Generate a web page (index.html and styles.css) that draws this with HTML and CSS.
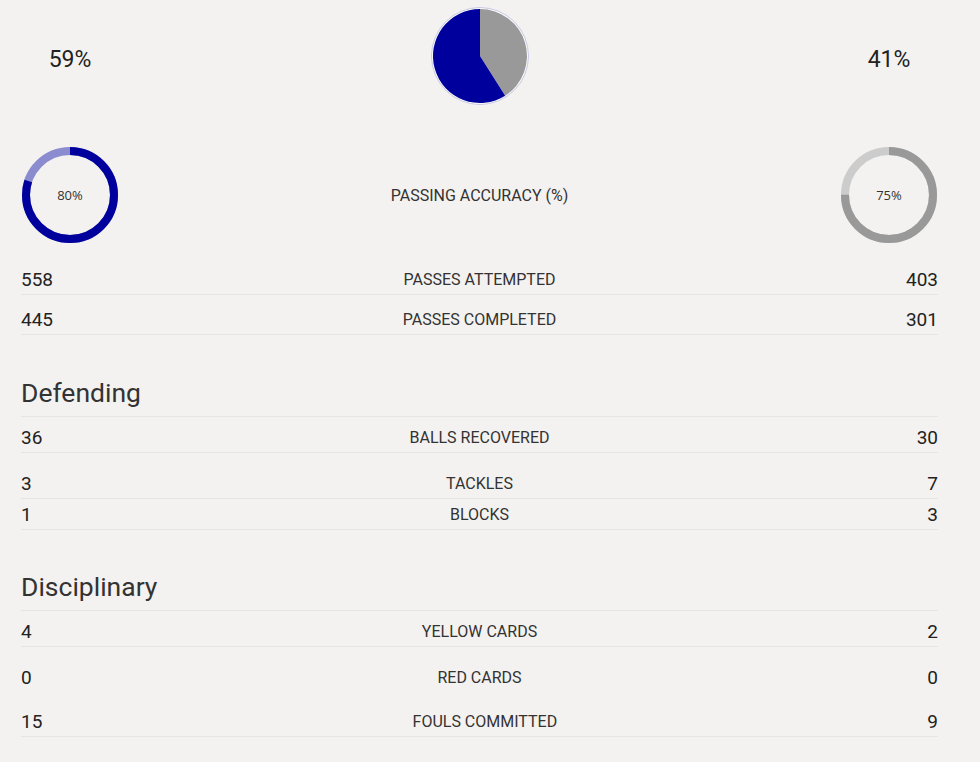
FILE: index.html
```html
<!DOCTYPE html>
<html lang="en">
<head>
<meta charset="utf-8">
<title>Match stats</title>
<link rel="stylesheet" href="styles.css">
</head>
<body>
<main class="stats">
  <section class="possession">
    <div class="pct">59%</div>
    <div class="pie-wrap">
      <svg class="pie" width="100" height="100" viewBox="0 0 100 100">
        <circle cx="50" cy="50" r="48.5" fill="none" stroke="#c9c9e6" stroke-width="1"/>
        <circle cx="50" cy="50" r="47.5" fill="#ffffff"/>
        <path d="M50,50 L50,3 A47,47 0 0 1 75.18,89.68 Z" fill="#999999"/>
        <path d="M50,50 L75.18,89.68 A47,47 0 1 1 50,3 Z" fill="#00009c"/>
      </svg>
    </div>
    <div class="pct">41%</div>
  </section>

  <section class="accuracy">
    <div class="donut">
      <svg width="96" height="96" viewBox="0 0 96 96">
        <circle cx="48" cy="48" r="47.5" fill="none" stroke="#e9e8ef" stroke-width="1"/>
        <circle cx="48" cy="48" r="44" fill="none" stroke="#8b8bd0" stroke-width="8"/>
        <circle cx="48" cy="48" r="44" fill="none" stroke="#00009c" stroke-width="8" stroke-dasharray="221.17 276.46" transform="rotate(-90 48 48)"/>
      </svg>
      <span class="donut-label">80%</span>
    </div>
    <div class="label">PASSING ACCURACY (%)</div>
    <div class="donut">
      <svg width="96" height="96" viewBox="0 0 96 96">
        <circle cx="48" cy="48" r="47.5" fill="none" stroke="#ebebeb" stroke-width="1"/>
        <circle cx="48" cy="48" r="44" fill="none" stroke="#cccccc" stroke-width="8"/>
        <circle cx="48" cy="48" r="44" fill="none" stroke="#999999" stroke-width="8" stroke-dasharray="207.35 276.46" transform="rotate(-90 48 48)"/>
      </svg>
      <span class="donut-label">75%</span>
    </div>
  </section>

  <div class="row row--first"><span class="num">558</span><span class="label">PASSES ATTEMPTED</span><span class="num">403</span></div>
  <div class="row row--mid"><span class="num">445</span><span class="label">PASSES COMPLETED</span><span class="num">301</span></div>

  <h2 class="heading">Defending</h2>
  <div class="row"><span class="num">36</span><span class="label">BALLS RECOVERED</span><span class="num">30</span></div>
  <div class="row row--gap"><span class="num">3</span><span class="label">TACKLES</span><span class="num">7</span></div>
  <div class="row row--tight"><span class="num">1</span><span class="label">BLOCKS</span><span class="num">3</span></div>

  <h2 class="heading">Disciplinary</h2>
  <div class="row"><span class="num">4</span><span class="label">YELLOW CARDS</span><span class="num">2</span></div>
  <div class="row row--gap row--plain"><span class="num">0</span><span class="label">RED CARDS</span><span class="num">0</span></div>
  <div class="row row--gap2"><span class="num">15</span><span class="label">FOULS COMMITTED</span><span class="num">9</span></div>
</main>
</body>
</html>
```

FILE: styles.css
```css
html, body {
  margin: 0;
  padding: 0;
  background: #f3f2f0;
}

body {
  font-family: Roboto, "Liberation Sans", Arial, sans-serif;
  color: #333333;
}

.stats {
  width: 917px;
  margin-left: 21px;
}

.possession {
  display: grid;
  grid-template-columns: 98px 1fr 98px;
  align-items: center;
  padding-top: 6px;
  height: 100px;
}

.pct {
  text-align: center;
  font-size: 23px;
  color: #222222;
  padding-top: 6px;
}

.pie-wrap {
  display: flex;
  justify-content: center;
  height: 100px;
}

.pie {
  display: block;
}

.accuracy {
  display: grid;
  grid-template-columns: 98px 1fr 98px;
  align-items: center;
  margin-top: 41px;
  height: 96px;
}

.donut {
  position: relative;
  width: 96px;
  height: 96px;
  margin-left: 1px;
}

.donut svg {
  display: block;
}

.donut-label {
  position: absolute;
  inset: 0;
  display: flex;
  align-items: center;
  justify-content: center;
  font-family: "Open Sans", "Liberation Sans", sans-serif;
  font-size: 13px;
  color: #333333;
}

.label {
  text-align: center;
  font-size: 16px;
  color: #333333;
}

.row {
  display: flex;
  justify-content: space-between;
  align-items: center;
  height: 30px;
  margin-top: 5px;
  border-bottom: 1px solid #e7e5e3;
}

.row--first { margin-top: 21px; }
.row--mid { margin-top: 9px; }
.row--gap { margin-top: 15px; }
.row--gap2 { margin-top: 13px; }
.row--tight { margin-top: 0; }
.row--plain { border-bottom-color: transparent; }

.num {
  font-size: 19px;
  color: #222222;
}

.heading {
  margin: 43px 0 0;
  font-size: 26.5px;
  font-weight: 400;
  line-height: 30px;
  height: 30px;
  padding-bottom: 8px;
  color: #333333;
  border-bottom: 1px solid #e7e5e3;
}

.heading + .row { margin-top: 5px; }

.row--tight + .heading { margin-top: 42px; }
```
